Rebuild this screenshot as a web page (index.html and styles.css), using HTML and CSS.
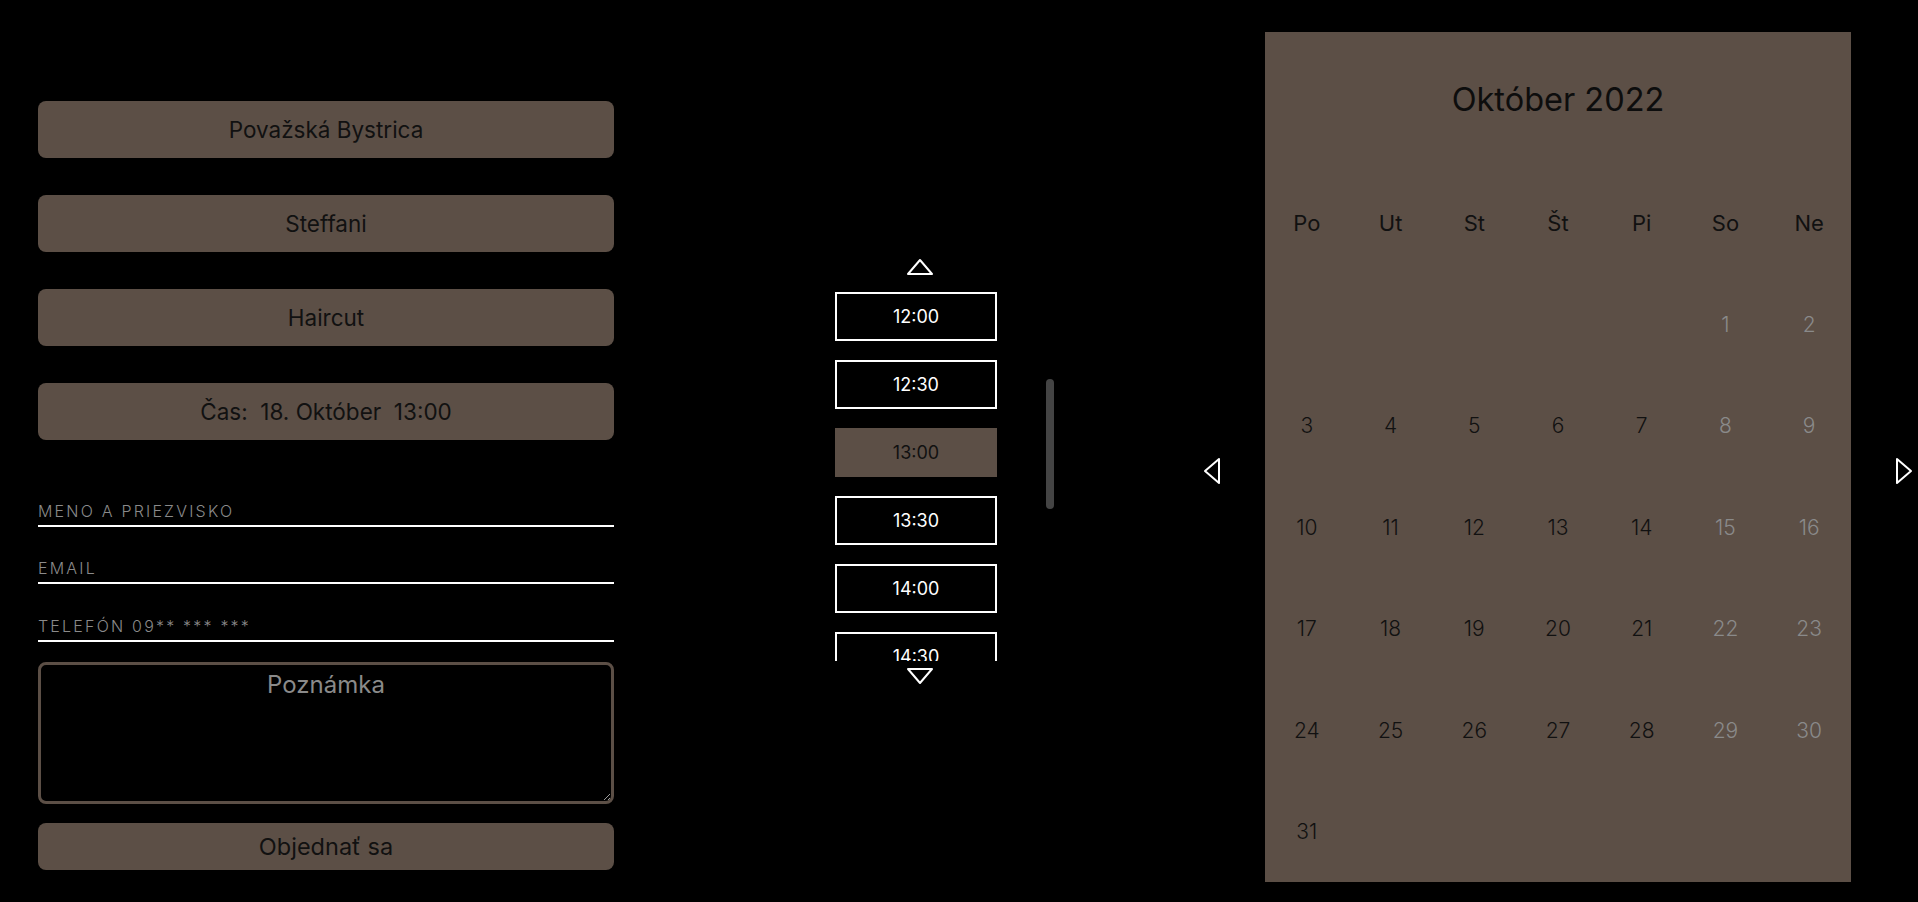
FILE: index.html
```html
<!DOCTYPE html>
<html lang="sk">
  <head>
    <meta charset="utf-8" />
    <meta name="viewport" content="width=device-width, initial-scale=1" />
    <title>Rezervácia termínu</title>
    <link rel="stylesheet" href="styles.css">
  </head>
  <body>
    <main class="booking">
      <!-- left: summary of choices + contact form -->
      <form class="order">
        <button type="button" class="pick">Považská Bystrica</button>
        <button type="button" class="pick">Steffani</button>
        <button type="button" class="pick">Haircut</button>
        <button type="button" class="pick">Čas:&nbsp; 18. Október&nbsp; 13:00</button>

        <input class="field field-first" type="text" placeholder="Meno a priezvisko" />
        <input class="field" type="email" placeholder="Email" />
        <input class="field" type="tel" placeholder="Telefón 09** *** ***" />

        <textarea class="note" placeholder="Poznámka"></textarea>

        <button type="submit" class="pick submit">Objednať sa</button>
      </form>

      <!-- middle: time slots -->
      <div class="times">
        <div class="times-col">
          <button type="button" class="slot-arrow" aria-label="Hore">
            <svg width="28" height="18" viewBox="0 0 28 18"><polygon points="14,2 26,16 2,16" /></svg>
          </button>
          <div class="slot-list" id="slot-list">
            <button type="button" class="slot">10:00</button>
            <button type="button" class="slot">10:30</button>
            <button type="button" class="slot">11:00</button>
            <button type="button" class="slot">11:30</button>
            <button type="button" class="slot">12:00</button>
            <button type="button" class="slot">12:30</button>
            <button type="button" class="slot active">13:00</button>
            <button type="button" class="slot">13:30</button>
            <button type="button" class="slot">14:00</button>
            <button type="button" class="slot">14:30</button>
            <button type="button" class="slot">15:00</button>
            <button type="button" class="slot">15:30</button>
            <button type="button" class="slot">16:00</button>
            <button type="button" class="slot">16:30</button>
            <button type="button" class="slot">17:00</button>
            <button type="button" class="slot">17:30</button>
          </div>
          <button type="button" class="slot-arrow" aria-label="Dole">
            <svg width="28" height="18" viewBox="0 0 28 18"><polygon points="2,2 26,2 14,16" /></svg>
          </button>
        </div>
        <div class="track"><div class="thumb" id="thumb"></div></div>
      </div>

      <!-- right: month calendar -->
      <div class="calendar-wrap">
        <button type="button" class="cal-arrow" aria-label="Predchádzajúci mesiac">
          <svg width="20" height="28" viewBox="0 0 20 28"><polygon points="17,2 3,14 17,26" /></svg>
        </button>
        <section class="calendar">
          <h2 class="cal-title">Október 2022</h2>
          <div class="cal-grid" id="cal-grid">
            <span class="wd">Po</span><span class="wd">Ut</span><span class="wd">St</span><span class="wd">Št</span><span class="wd">Pi</span><span class="wd">So</span><span class="wd">Ne</span>
          </div>
        </section>
        <button type="button" class="cal-arrow" aria-label="Ďalší mesiac">
          <svg width="20" height="28" viewBox="0 0 20 28"><polygon points="3,2 17,14 3,26" /></svg>
        </button>
      </div>
    </main>

    <script>
      // October 2022 starts on Saturday
      const grid = document.getElementById("cal-grid");
      const offset = 5;
      for (let i = 0; i < offset; i++) {
        grid.appendChild(document.createElement("span"));
      }
      for (let d = 1; d <= 31; d++) {
        const cell = document.createElement("span");
        cell.className = "day";
        if ((d + offset - 1) % 7 >= 5) cell.classList.add("weekend");
        cell.textContent = d;
        grid.appendChild(cell);
      }

      // scroll slots so 12:00 is on top and sync the fake scrollbar
      const list = document.getElementById("slot-list");
      const thumb = document.getElementById("thumb");
      function syncThumb() {
        const ratio = list.clientHeight / list.scrollHeight;
        thumb.style.height = list.clientHeight * ratio + "px";
        thumb.style.marginTop = list.scrollTop * ratio + "px";
      }
      list.addEventListener("scroll", syncThumb);
      list.scrollTop = 4 * 68;
      syncThumb();
    </script>
  </body>
</html>
```

FILE: styles.css
```css
:root {
  --bg: #000;
  --brown: #5c4f46;
  --ink: #111;
  --muted: #8a8a8a;
}

* {
  box-sizing: border-box;
}

html,
body {
  margin: 0;
  padding: 0;
}

body {
  background: var(--bg);
  color: #fff;
  font-family: Inter, "Noto Sans", "DejaVu Sans", sans-serif;
  height: 902px;
  overflow: hidden;
}

button {
  font-family: inherit;
  cursor: pointer;
}

.booking {
  display: flex;
  align-items: flex-start;
  padding-left: 38px;
}

/* ---- form ---- */
.order {
  width: 576px;
  margin-top: 101px;
  display: flex;
  flex-direction: column;
}
.pick {
  height: 56.5px;
  margin-bottom: 37.5px;
  border: none;
  border-radius: 8px;
  background: var(--brown);
  color: var(--ink);
  font-size: 22.5px;
}
.pick:nth-of-type(4) {
  margin-bottom: 0;
}

.field {
  height: 39px;
  margin-top: 18.5px;
  padding: 9px 0 0;
  border: none;
  border-bottom: 2px solid #fff;
  background: transparent;
  color: #fff;
  font-family: inherit;
  font-size: 16px;
  font-weight: 300;
  letter-spacing: 2.2px;
  outline: none;
}
.field-first {
  margin-top: 48px;
}
.field::placeholder {
  color: #8a8a8a;
  text-transform: uppercase;
}

.note {
  height: 142px;
  margin-top: 20px;
  padding: 5px 12px;
  border: 3px solid var(--brown);
  border-radius: 8px;
  background: #000;
  color: #fff;
  font-family: inherit;
  font-size: 24px;
  text-align: center;
  outline: none;
}
.note::placeholder {
  color: #8a8a8a;
}

.submit {
  height: 47px;
  margin-top: 19px;
  margin-bottom: 0;
  font-size: 23.5px;
}

/* ---- time slots ---- */
.times {
  display: flex;
  margin-left: 220px;
  margin-top: 260px;
}
.times-col {
  width: 164px;
  display: flex;
  flex-direction: column;
  align-items: center;
}
.slot-arrow {
  display: block;
  padding: 0 0 0 8px;
  border: none;
  background: none;
  line-height: 0;
}
.slot-arrow svg polygon,
.cal-arrow svg polygon {
  fill: none;
  stroke: #fff;
  stroke-width: 2;
  stroke-linejoin: round;
}
.slot-arrow:first-child {
  margin-top: -2px;
  margin-bottom: 8px;
}
.slot-arrow:last-child {
  margin-top: 6px;
}
.slot-list {
  width: 164px;
  height: 377px;
  padding: 8px 1px;
  display: flex;
  flex-direction: column;
  gap: 19px;
  overflow-y: scroll;
  scrollbar-width: none;
}
.slot-list::-webkit-scrollbar {
  display: none;
}
.slot {
  flex: none;
  height: 49px;
  border: 2px solid #fff;
  background: #000;
  color: #fff;
  font-size: 18px;
}
.slot.active {
  border-color: var(--brown);
  background: var(--brown);
  color: var(--ink);
}
.track {
  width: 8px;
  height: 377px;
  margin-left: 48px;
  margin-top: 24px;
}
.thumb {
  width: 8px;
  border-radius: 4px;
  background: #444;
}

/* ---- calendar ---- */
.calendar-wrap {
  display: flex;
  align-items: center;
  gap: 43px;
  margin-left: 148px;
  margin-top: 32px;
}
.cal-arrow {
  margin-top: 28px;
  padding: 0;
  border: none;
  background: none;
  line-height: 0;
}
.calendar {
  width: 586px;
  height: 850px;
  background: var(--brown);
  color: var(--ink);
}
.cal-title {
  height: 140px;
  margin: 0;
  padding-bottom: 5px;
  display: flex;
  align-items: center;
  justify-content: center;
  font-size: 32.5px;
  font-weight: 400;
  color: #0d0d0d;
}
.cal-grid {
  display: grid;
  grid-template-columns: repeat(7, 1fr);
  grid-auto-rows: 101.5px;
  align-items: center;
  text-align: center;
}
.wd {
  font-size: 22px;
}
.day {
  font-size: 21px;
  font-weight: 300;
}
.day.weekend {
  color: var(--muted);
}
```
